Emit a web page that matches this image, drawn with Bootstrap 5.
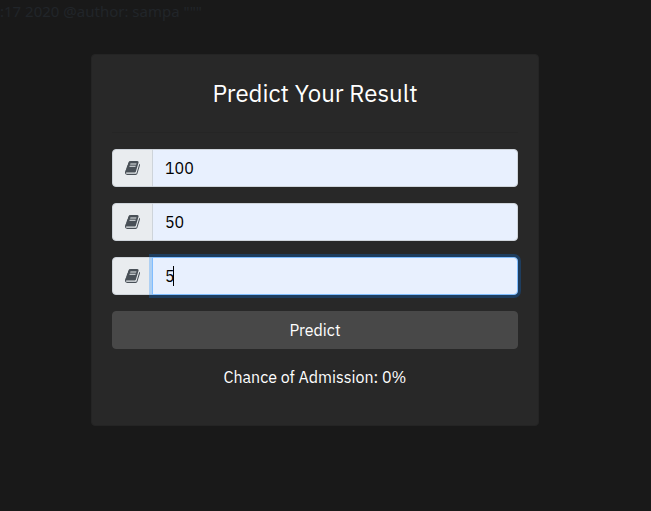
<!DOCTYPE html>
<html lang="en">
<head>
<meta charset="utf-8">
<meta name="viewport" content="width=device-width, initial-scale=1">
<title>Predict Your Result</title>
<link href="https://cdn.jsdelivr.net/npm/bootstrap@5.3.0/dist/css/bootstrap.min.css" rel="stylesheet">
<style>
  body { background: #191919; font-family: "IBM Plex Sans", Roboto, "Liberation Sans", sans-serif; }
  .file-note { color: #212529; font-family: "Segoe UI", "Noto Sans", sans-serif; font-size: 15px; line-height: 22px; height: 54px; }
  .page-area { padding: 0 112px 0 91px; }
  .predict-card { max-width: 448px; background: #282828; border-color: #242424; border-radius: 4px; color: #fff; }
  .predict-body { padding: 23px 20px 36px; }
  .predict-title { font-size: 24px; line-height: 30px; font-weight: 400; }
  .predict-rule { margin: 24px 0 16px; border-color: #252525; opacity: 1; }
  .predict-card .input-group-text { width: 41px; padding: 0 12px; background: #e9ecef; border-color: #ced4da; color: #495057; border-radius: 4px 0 0 4px; }
  .predict-card .input-group .form-control { background: #e8f0fe; border-color: #ced4da; color: #000; caret-color: transparent; height: 38px; border-radius: 0 4px 4px 0; }
  .predict-card .input-group .form-control:focus, .predict-card .input-group .form-control.is-current { border-color: #80bdff; box-shadow: 0 0 0 3px rgba(0,123,255,.25); z-index: 5; }
  .field-caret { position: absolute; left: 62px; top: 9px; width: 1px; height: 20px; background: #000; z-index: 6; }
  .btn-predict { --bs-btn-color: #fff; --bs-btn-bg: #484848; --bs-btn-border-color: #484848; --bs-btn-hover-color: #fff; --bs-btn-hover-bg: #555; border-radius: 4px; }
</style>
<script src="https://cdn.jsdelivr.net/npm/bootstrap@5.3.0/dist/js/bootstrap.bundle.min.js"></script>
</head>
<body class="overflow-hidden">
<svg class="d-none" aria-hidden="true">
  <symbol id="book" viewBox="0 0 1664 1536">
    <path fill="currentColor" d="M1639 350q40 57 18 129l-275 906q-19 64-76.500 107.500t-122.500 43.500h-923q-77 0-148.500-53.500t-99.500-131.500q-24-67-2-127 0-4 3-27t4-37q1-8-3-21.500t-3-19.500q2-11 8-21t16.500-23.500 16.500-23.500q23-38 45-91.500t30-91.500q3-10 .5-30t-.5-28q3-11 17-28t17-23q21-36 42-92t25-90q1-9-2.500-32t.5-28q4-13 22-30.500t22-22.500q19-26 42.500-84.500t27.500-96.500q1-8-3-25.500t-2-26.500q2-8 9-18t18-23 17-21q8-12 16.500-30.500t15-35 16-36 19.500-32 26.500-23.500 36-11.500 47.500 5.500l-1 3q38-9 51-9h761q74 0 114 56t18 130l-274 906q-36 119-71.500 153.500t-128.500 34.500h-869q-27 0-38 15-11 16-1 43 24 70 144 70h923q29 0 56-15.500t35-41.500l300-987q7-22 5-57 38 15 59 43zM575 352q-4 13 2 22.500t20 9.500h608q13 0 25.500-9.500t16.500-22.500l21-64q4-13-2-22.500t-20-9.500h-608q-13 0-25.500 9.500t-16.500 22.500zM492 608q-4 13 2 22.500t20 9.500h608q13 0 25.500-9.500t16.500-22.500l21-64q4-13-2-22.500t-20-9.500h-608q-13 0-25.500 9.500t-16.500 22.500z"/>
  </symbol>
</svg>
<div class="file-note text-nowrap">:17 2020 @author: sampa """</div>
<main class="page-area">
  <div class="card predict-card mx-auto">
    <form class="predict-body">
      <h1 class="predict-title text-center m-0">Predict Your Result</h1>
      <hr class="predict-rule">
      <div class="input-group mb-3">
        <label class="input-group-text" for="score1" aria-label="First score"><svg width="15" height="14"><use href="#book"/></svg></label>
        <input class="form-control" id="score1" type="text" value="100">
      </div>
      <div class="input-group mb-3">
        <label class="input-group-text" for="score2" aria-label="Second score"><svg width="15" height="14"><use href="#book"/></svg></label>
        <input class="form-control" id="score2" type="text" value="50">
      </div>
      <div class="input-group mb-3">
        <label class="input-group-text" for="score3" aria-label="Third score"><svg width="15" height="14"><use href="#book"/></svg></label>
        <span class="field-caret"></span>
        <input class="form-control is-current" id="score3" type="text" value="5">
      </div>
      <button class="btn btn-predict w-100 mb-3" type="button">Predict</button>
      <p class="text-center m-0">Chance of Admission: 0%</p>
    </form>
  </div>
</main>
</body>
</html>
